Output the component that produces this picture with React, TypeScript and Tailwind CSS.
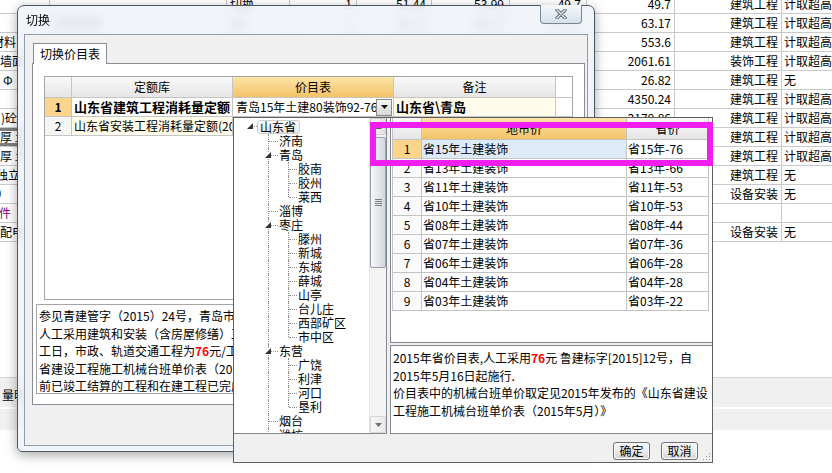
import React from "react";

type TreeRow = { t: string; lv: 0 | 1 | 2; exp?: boolean; last?: boolean };

const bgCols = [
  "w-[58px]",
  "w-[177px] pl-[3px]",
  "w-[63px] pl-[3px]",
  "w-[67px] text-right pr-[4px]",
  "w-[75px] text-right pr-[5px]",
  "w-[78px] text-right pr-[5px]",
  "w-[77px] text-right pr-[5px]",
  "w-[88px] text-right pr-[3px]",
  "w-[107px] text-right pr-[3px]",
  "w-[118px] pl-[2px]",
];

const leftCls = [
  "pl-[3px]",
  "pl-[3px]",
  "pl-0",
  "pl-[8px]",
  "pl-[11px]",
  "pl-[3px]",
  "pl-[9px]",
  "pl-[8px]",
  "pl-[8px]",
  "pl-[4px]",
  "pl-[5px]",
  "pl-[7px] text-[#800080]",
  "pl-[8px]",
];

const bgRows: string[][] = [
  ["", "", "切换", "1", "51.44", "53.99", "49.7", "49.7", "建筑工程", "计取超高"],
  ["", "平整场地", "m2", "1", "63.17", "63.17", "63.17", "63.17", "建筑工程", "计取超高"],
  ["材料", "挖土方", "m3", "1", "553.6", "553.6", "553.6", "553.6", "建筑工程", "计取超高"],
  ["墙面", "抹灰", "m2", "1", "2061.61", "2061.61", "2061.61", "2061.61", "装饰工程", "计取超高"],
  ["Φ", "钢筋", "t", "1", "26.82", "26.82", "26.82", "26.82", "建筑工程", "无"],
  ["", "砌块墙", "m3", "1", "4350.24", "4350.24", "4350.24", "4350.24", "建筑工程", "计取超高"],
  [")砼", "现浇", "m3", "1", "2179.86", "2179.86", "2179.86", "2179.86", "建筑工程", "计取超高"],
  ["厚 土", "", "", "", "", "", "", "", "建筑工程", "计取超高"],
  ["厚 土", "", "", "", "", "", "", "", "建筑工程", "计取超高"],
  ["独立", "", "", "", "", "", "", "", "建筑工程", "无"],
  ["）", "", "", "", "", "", "", "", "设备安装", "无"],
  ["件", "", "", "", "", "", "", "", "", ""],
  ["配电", "", "", "", "", "", "", "", "设备安装", "无"],
];

const treeRows: TreeRow[] = [
  { t: "山东省", lv: 0, exp: true },
  { t: "济南", lv: 1 },
  { t: "青岛", lv: 1, exp: true },
  { t: "胶南", lv: 2 },
  { t: "胶州", lv: 2 },
  { t: "莱西", lv: 2, last: true },
  { t: "淄博", lv: 1 },
  { t: "枣庄", lv: 1, exp: true },
  { t: "滕州", lv: 2 },
  { t: "新城", lv: 2 },
  { t: "东城", lv: 2 },
  { t: "薛城", lv: 2 },
  { t: "山亭", lv: 2 },
  { t: "台儿庄", lv: 2 },
  { t: "西部矿区", lv: 2 },
  { t: "市中区", lv: 2, last: true },
  { t: "东营", lv: 1, exp: true },
  { t: "广饶", lv: 2 },
  { t: "利津", lv: 2 },
  { t: "河口", lv: 2 },
  { t: "垦利", lv: 2, last: true },
  { t: "烟台", lv: 1 },
  { t: "潍坊", lv: 1 },
];

const priceRows = [
  ["省15年土建装饰", "省15年-76"],
  ["省13年土建装饰", "省13年-66"],
  ["省11年土建装饰", "省11年-53"],
  ["省10年土建装饰", "省10年-53"],
  ["省08年土建装饰", "省08年-44"],
  ["省07年土建装饰", "省07年-36"],
  ["省06年土建装饰", "省06年-28"],
  ["省04年土建装饰", "省04年-28"],
  ["省03年土建装饰", "省03年-22"],
];

function BackSheet() {
  return (
    <div className="flex flex-col">
      <div className="-mt-[5px] -ml-[8px] flex flex-col">
        {bgRows.map((row, i) => (
          <div key={i} className="flex h-[19px] shrink-0 border-b border-[#c9c9c9]">
            {row.map((c, j) => (
              <div
                key={j}
                className={`h-full shrink-0 border-r border-[#c9c9c9] leading-[18px] overflow-hidden whitespace-nowrap ${bgCols[j]} ${j === 0 ? leftCls[i] : ""}`}
              >
                {j === 0 && i === 7 ? (
                  <div className="h-full border-y-[3px] border-[#7d7d7d] leading-[12px]">{c}</div>
                ) : (
                  c
                )}
              </div>
            ))}
          </div>
        ))}
      </div>
      <div className="h-[135px] shrink-0" />
      <div className="h-[30px] shrink-0 border-t border-[#d4d4d4] bg-[#f0f0f0] pl-[2px] pt-[10px] leading-[14px]">量明</div>
      <div className="h-[2px] shrink-0" />
      <div className="h-[21px] shrink-0 bg-[#f0f0f0]" />
    </div>
  );
}

function MainGrid() {
  const hd = "h-full shrink-0 border-r border-[#c5c5c5] flex items-center justify-center leading-[14px]";
  const gray = "bg-gradient-to-b from-[#f9f9f9] to-[#e6e6e6]";
  const orange = "bg-gradient-to-b from-[#fde3a7] to-[#f2c366]";
  const cell = "h-full shrink-0 border-r border-[#c5c5c5] flex items-center overflow-hidden whitespace-nowrap leading-[14px]";
  return (
    <div className="w-[529px] h-[224px] shrink-0 border border-[#a5a5a5] bg-white">
      <div className="flex h-[21px] border-b border-[#c5c5c5]">
        <div className={`${hd} ${gray} w-[27px]`} />
        <div className={`${hd} ${gray} w-[161px]`}>定额库</div>
        <div className={`${hd} ${orange} w-[161px]`}>价目表</div>
        <div className={`${hd} ${gray} w-[162px]`}>备注</div>
      </div>
      <div className="flex h-[19px] border-b border-[#c5c5c5]">
        <div className={`${cell} w-[27px] justify-center bg-[#fcd48c] font-bold`}>1</div>
        <div className={`${cell} w-[161px] pl-[2px] font-bold text-[13px]`}>山东省建筑工程消耗量定额</div>
        <div className={`${cell} w-[161px] bg-white`}>
          <span className="flex-1 pl-[3px] overflow-hidden whitespace-nowrap">青岛15年土建80装饰92-76</span>
          <div className="w-[16px] h-[17px] mr-px shrink-0 border border-[#8a8a8a] bg-gradient-to-b from-[#f5f5f5] to-[#d8d8d8] flex items-center justify-center">
            <svg width="7" height="4" viewBox="0 0 7 4">
              <path d="M0 0H7L3.5 4Z" fill="#111" />
            </svg>
          </div>
        </div>
        <div className={`${cell} w-[162px] pl-[2px] bg-[#fffcec] font-bold text-[13px]`}>{"山东省\\青岛"}</div>
      </div>
      <div className="flex h-[19px] border-b border-[#c5c5c5]">
        <div className={`${cell} w-[27px] justify-center bg-[#f5f5f5]`}>2</div>
        <div className={`${cell} w-[161px] pl-[2px] bg-[#fffcec]`}>山东省安装工程消耗量定额(2013)</div>
        <div className={`${cell} w-[161px] pl-[3px] bg-white`}>省13年安装</div>
        <div className={`${cell} w-[162px] pl-[2px] bg-[#fffcec]`}>山东省</div>
      </div>
    </div>
  );
}

function SwitchDialog() {
  return (
    <div className="absolute left-[17px] top-[5px] w-[578px] h-[447px] flex flex-col rounded-t-[7px] rounded-b-[5px] border border-[#4e5864] bg-[#eef3f9]/85 backdrop-blur-[5px] px-[6px] pb-[5px] shadow-[0_3px_12px_rgba(0,0,0,0.35)]">
      <div className="relative h-[28px] shrink-0 flex items-center pl-[2px]">
        <span className="leading-[14px]">切换</span>
        <div className="absolute right-[6px] -top-px w-[42px] h-[19px] rounded-b-[4px] border border-t-0 border-[#7a8796] bg-gradient-to-b from-[#f6f9fc] to-[#d8e0e9] flex items-center justify-center">
          <svg width="12" height="10" viewBox="0 0 12 10">
            <path d="M2 1L10 9M10 1L2 9" stroke="#59636f" strokeWidth="3.2" strokeLinecap="round" />
            <path d="M2 1L10 9M10 1L2 9" stroke="#eceff3" strokeWidth="1.4" strokeLinecap="round" />
          </svg>
        </div>
      </div>
      <div className="flex-1 flex flex-col border border-[#8f9cab] bg-[#f0f0f0] pl-[7px] pt-[8px]">
        <div className="flex">
          <div className="relative z-10 ml-px -mb-px h-[21px] w-[74px] border border-b-0 border-[#898c95] bg-white flex items-center justify-center leading-[14px]">
            切换价目表
          </div>
        </div>
        <div className="w-[553px] h-[342px] shrink-0 border border-[#898c95] bg-white pl-[11px] pt-[12px]">
          <MainGrid />
          <div className="mt-[4px] -ml-[8px] w-[545px] h-[90px] border border-[#a5a5a5] pl-[2px] pt-[2px] leading-[17.5px] whitespace-nowrap overflow-hidden">
            <div>参见青建管字（2015）24号，青岛市建设工程人工工日单价调整如下：</div>
            <div>人工采用建筑和安装（含房屋修缮）工程为66元/工日，园林绿化工程为60元/</div>
            <div>
              工日，市政、轨道交通工程为<span className="text-[#ff0000] font-bold">76</span>元/工日；机械台班执行《山东
            </div>
            <div>省建设工程施工机械台班单价表（2015年5月）》，2015年5月16日</div>
            <div>前已竣工结算的工程和在建工程已完成部分不作调整。</div>
          </div>
        </div>
      </div>
    </div>
  );
}

function Triangle() {
  return (
    <svg width="6" height="6" viewBox="0 0 6 6">
      <path d="M6 0L6 6L0 6Z" fill="#333" />
    </svg>
  );
}

function Tree() {
  const dot = "border-dotted border-[#8e8e8e]";
  return (
    <div className="w-[153px] h-[316px] shrink-0 border-r border-b border-[#828790] bg-white flex">
      <div className="flex-1 overflow-hidden flex flex-col">
        {treeRows.map((r, i) =>
          r.lv === 0 ? (
            <div key={i} className="relative h-[16px] shrink-0">
              <div className="absolute left-[13px] top-[5px] flex">
                <Triangle />
              </div>
              <div className={`absolute left-[20px] top-[8px] w-[3px] border-t ${dot}`} />
              <div className="absolute left-[23px] top-[2px] h-[14px] w-[43px] rounded-[3px] border border-[#cfcfcf] bg-gradient-to-b from-[#fbfbfb] to-[#ebebeb] pl-[2px] leading-[12px] overflow-hidden">
                {r.t}
              </div>
            </div>
          ) : (
            <div key={i} className="relative h-[14px] shrink-0">
              <div className={`absolute left-[34px] top-0 h-full border-l ${dot}`} />
              {r.lv === 1 && <div className={`absolute left-[35px] top-[7px] w-[9px] border-t ${dot}`} />}
              {r.lv === 2 && (
                <div className={`absolute left-[54px] top-0 border-l ${dot} ${r.last ? "h-[7px]" : "h-full"}`} />
              )}
              {r.lv === 2 && <div className={`absolute left-[55px] top-[7px] w-[8px] border-t ${dot}`} />}
              {r.exp && (
                <div className="absolute left-[31px] top-[4px] flex bg-white">
                  <Triangle />
                </div>
              )}
              <div
                className={`h-full flex items-center whitespace-nowrap leading-[14px] ${r.lv === 1 ? "pl-[45px]" : "pl-[64px]"}`}
              >
                {r.t}
              </div>
            </div>
          )
        )}
      </div>
      <div className="w-[17px] shrink-0 flex flex-col bg-[#f4f4f4] border-l border-[#e4e4e4]">
        <div className="h-[17px] shrink-0 rounded-[2px] border border-[#cdcdcd] bg-gradient-to-r from-[#f6f6f6] to-[#e2e2e2] flex items-center justify-center">
          <svg width="7" height="4" viewBox="0 0 7 4">
            <path d="M0 4H7L3.5 0Z" fill="#606060" />
          </svg>
        </div>
        <div className="flex-1 pt-[2px]">
          <div className="h-[131px] rounded-[2px] border border-[#9a9ea4] bg-gradient-to-r from-[#f5f7f9] to-[#d3d8de] flex flex-col items-center justify-center gap-[1px]">
            <div className="w-[7px] h-px bg-[#7a7e84]" />
            <div className="w-[7px] h-px bg-[#7a7e84]" />
            <div className="w-[7px] h-px bg-[#7a7e84]" />
            <div className="w-[7px] h-px bg-[#7a7e84]" />
          </div>
        </div>
        <div className="h-[17px] shrink-0 rounded-[2px] border border-[#d6d6d6] bg-gradient-to-r from-[#f8f8f8] to-[#e8e8e8] flex items-center justify-center">
          <svg width="7" height="4" viewBox="0 0 7 4">
            <path d="M0 0H7L3.5 4Z" fill="#707070" />
          </svg>
        </div>
      </div>
    </div>
  );
}

function PriceGrid() {
  const c = "h-full shrink-0 border-r border-[#c3c3c3] flex items-center overflow-hidden whitespace-nowrap leading-[14px]";
  return (
    <div className="w-[317px] border-l border-[#c3c3c3]">
      <div className="flex h-[22px] border-b border-[#c3c3c3]">
        <div className={`${c} w-[29px] bg-gradient-to-b from-[#f9f9f9] to-[#e6e6e6]`} />
        <div className={`${c} w-[205px] justify-center bg-gradient-to-b from-[#fde3a7] to-[#f2c366]`}>地市价</div>
        <div className={`${c} w-[82px] justify-center bg-gradient-to-b from-[#f9f9f9] to-[#e6e6e6]`}>省价</div>
      </div>
      {priceRows.map((r, i) => (
        <div key={i} className="flex h-[19px] border-b border-[#c3c3c3]">
          <div className={`${c} w-[29px] justify-center ${i === 0 ? "bg-[#fcd48c]" : "bg-[#fafafa]"}`}>{i + 1}</div>
          <div className={`${c} w-[205px] pl-px ${i === 0 ? "bg-[#ddeaf8]" : "bg-white"}`}>{r[0]}</div>
          <div className={`${c} w-[82px] pl-px bg-white`}>{r[1]}</div>
        </div>
      ))}
    </div>
  );
}

function Btn({ label }: { label: string }) {
  return (
    <div className="w-[37px] h-[18px] rounded-[3px] border border-[#707070] bg-gradient-to-b from-[#f4f4f4] via-[#ebebeb] to-[#d5d5d5] shadow-[inset_0_0_0_1px_#fbfbfb] flex items-center justify-center leading-[14px]">
      {label}
    </div>
  );
}

function PricePopup() {
  return (
    <div className="absolute left-[233px] top-[117px] w-[480px] h-[346px] border border-[#5f5f5f] bg-[#f0f0f0] flex flex-col">
      <div className="flex h-[316px] shrink-0">
        <Tree />
        <div className="w-[3px] shrink-0" />
        <div className="flex-1 flex flex-col">
          <div className="h-[225px] shrink-0 border-l border-b border-[#828790] bg-white pl-px">
            <PriceGrid />
          </div>
          <div className="h-[2px] shrink-0" />
          <div className="h-[89px] shrink-0 border border-r-0 border-[#828790] bg-white pl-[2px] pt-[3px] leading-[17.5px] whitespace-nowrap overflow-hidden">
            <div>
              2015年省价目表,人工采用<span className="text-[#ff0000] font-bold">76</span>元 鲁建标字[2015]12号，自
            </div>
            <div>2015年5月16日起施行.</div>
            <div>价目表中的机械台班单价取定见2015年发布的《山东省建设</div>
            <div>工程施工机械台班单价表（2015年5月）》</div>
          </div>
        </div>
      </div>
      <div className="relative flex-1 flex justify-end items-start pt-[8px] pr-[14px] gap-[11px]">
        <Btn label="确定" />
        <Btn label="取消" />
        <svg className="absolute right-[1px] bottom-[1px]" width="10" height="10" viewBox="0 0 10 10">
          <rect x="8" y="2" width="1" height="1" fill="#9a9a9a" />
          <rect x="8" y="5" width="1" height="1" fill="#9a9a9a" />
          <rect x="5" y="5" width="1" height="1" fill="#9a9a9a" />
          <rect x="8" y="8" width="1" height="1" fill="#9a9a9a" />
          <rect x="5" y="8" width="1" height="1" fill="#9a9a9a" />
          <rect x="2" y="8" width="1" height="1" fill="#9a9a9a" />
        </svg>
      </div>
    </div>
  );
}

export default function App() {
  return (
    <div className="relative w-[832px] h-[473px] overflow-hidden bg-white text-[12px] text-black font-['Noto_Sans_CJK_SC','Noto_Sans',sans-serif]">
      <BackSheet />
      <SwitchDialog />
      <PricePopup />
      <div className="absolute left-[370px] top-[122px] w-[343px] h-[44px] border-[6px] border-[#f01ef0]" />
    </div>
  );
}
